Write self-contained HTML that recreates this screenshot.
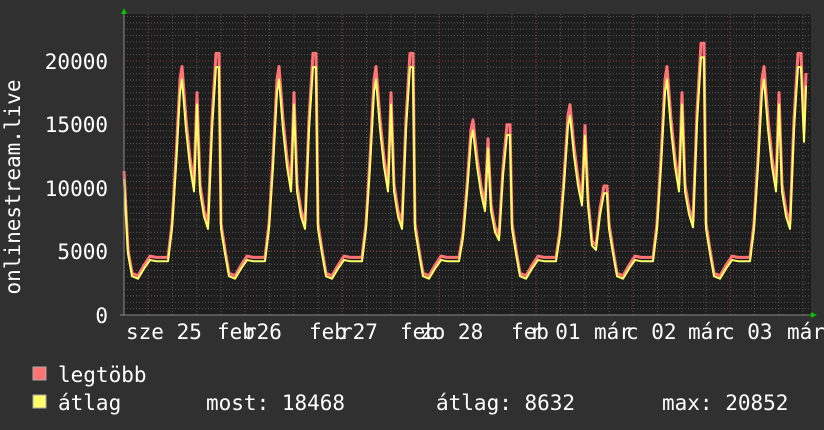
<!DOCTYPE html><html><head><meta charset="utf-8"><style>
body{margin:0;background:#303030;width:824px;height:430px;overflow:hidden;font-family:"DejaVu Sans Mono","Liberation Mono",monospace;color:#fff}
</style></head><body>
<svg id="s" width="824" height="430" xmlns="http://www.w3.org/2000/svg" style="position:absolute;left:0;top:0">
<rect width="824" height="430" fill="#303030"/>
<rect x="124" y="14" width="687" height="301" fill="#1e1e1e"/>
<g id="grid"></g>
<polyline id="mx" fill="none" stroke="#ff7373" stroke-width="3" stroke-linejoin="round"/>
<polyline id="av" fill="none" stroke="#ffff66" stroke-width="2" stroke-linejoin="round"/>
<line x1="124" y1="10" x2="124" y2="315" stroke="#888" stroke-width="1"/>
<line x1="120" y1="315" x2="815" y2="315" stroke="#888" stroke-width="1"/>
<polygon points="121,14 127,14 124,8" fill="#00c000"/>
<polygon points="811,312 811,318 817,315" fill="#00c000"/>
<g font-family="DejaVu Sans Mono,monospace" font-size="21" fill="#fff">
<g text-anchor="end"><text x="108" y="69">20000</text><text x="108" y="132">15000</text><text x="108" y="196">10000</text><text x="108" y="259">5000</text><text x="108" y="323">0</text></g>
<text transform="translate(20,187) rotate(-90)" text-anchor="middle">onlinestream.live</text>
<text x="126" y="339">sze 25</text><text x="217" y="339">feb</text><text x="244" y="339">r26</text>
<text x="309" y="339">feb</text><text x="340" y="339">r27</text>
<text x="400" y="339">feb</text><text x="420" y="339">zo 28</text>
<text x="511" y="339">feb</text><text x="530" y="339">r 01</text>
<text x="594" y="339">már</text><text x="626" y="339">c 02</text>
<text x="688" y="339">már</text><text x="722" y="339">c 03</text><text x="787" y="339">már</text>
<text x="58" y="382">legtöbb</text>
<text x="58" y="410">átlag</text><text x="206" y="410">most: 18468</text><text x="436" y="410">átlag: 8632</text><text x="662" y="410">max: 20852</text>
</g>
<rect x="33" y="367" width="13" height="13" fill="#ff7373" stroke="#aaa" stroke-width="1"/>
<rect x="33" y="395" width="13" height="13" fill="#ffff66" stroke="#aaa" stroke-width="1"/>
</svg>
<script>
var g=document.getElementById('grid'),h='';
for(var y=315-6.35;y>14;y-=6.35)h+='<line x1="124" x2="811" y1="'+y.toFixed(1)+'" y2="'+y.toFixed(1)+'" stroke="#555" stroke-dasharray="1,2" stroke-width="1"/>';
for(var x=124;x<811;x+=24.25)h+='<line y1="14" y2="315" x1="'+x.toFixed(1)+'" x2="'+x.toFixed(1)+'" stroke="#555" stroke-dasharray="1,2" stroke-width="1"/>';
for(var x=148;x<811;x+=97)h+='<line y1="14" y2="315" x1="'+x+'" x2="'+x+'" stroke="#7a3a3a" stroke-dasharray="1,2" stroke-width="1"/>';
[61,124,188,251].forEach(function(y){h+='<line x1="124" x2="811" y1="'+y+'" y2="'+y+'" stroke="#7a3a3a" stroke-dasharray="1,2" stroke-width="1"/>';});
g.innerHTML=h;
var T=[[0,7],[4,5],[8,3.2],[14,3],[20,3.8],[26,4.5],[32,4.4],[44,4.4],[48,7],[52,12],[56,18],[58,19],[62,15],[66,12],[70,10],[73,17],[76,10],[80,8],[84,7],[88,15],[92,20],[95,20],[98,14],[101,8]];
var S=[[1,1],[1,1],[1,1],[0.72,0.65],[0.8,0.35],[1,1.05],[1,1]];
var P=[];
for(var k=0;k<7;k++){var x0=124+97*k;for(var i=0;i<T.length;i++){var dx=T[i][0],v=T[i][1];if(k==0&&dx==0)v=11;if(dx>=98&&k<6)continue;
var s=dx<48?1:(dx<80?S[k][0]:S[k][1]);if(dx>=48)v=4.4+(v-4.4)*s;var x=x0+dx;if(x>806){x=806;v=18.5;}
P.push([x,v]);if(x>=806)break;}}
function pts(o,f){return P.map(function(p){return p[0]+','+(315-p[1]*f*12.7+o).toFixed(1)}).join(' ')}
document.getElementById('mx').setAttribute('points',pts(0,1.03));
document.getElementById('av').setAttribute('points',pts(1,0.98));
</script>
</body></html>
